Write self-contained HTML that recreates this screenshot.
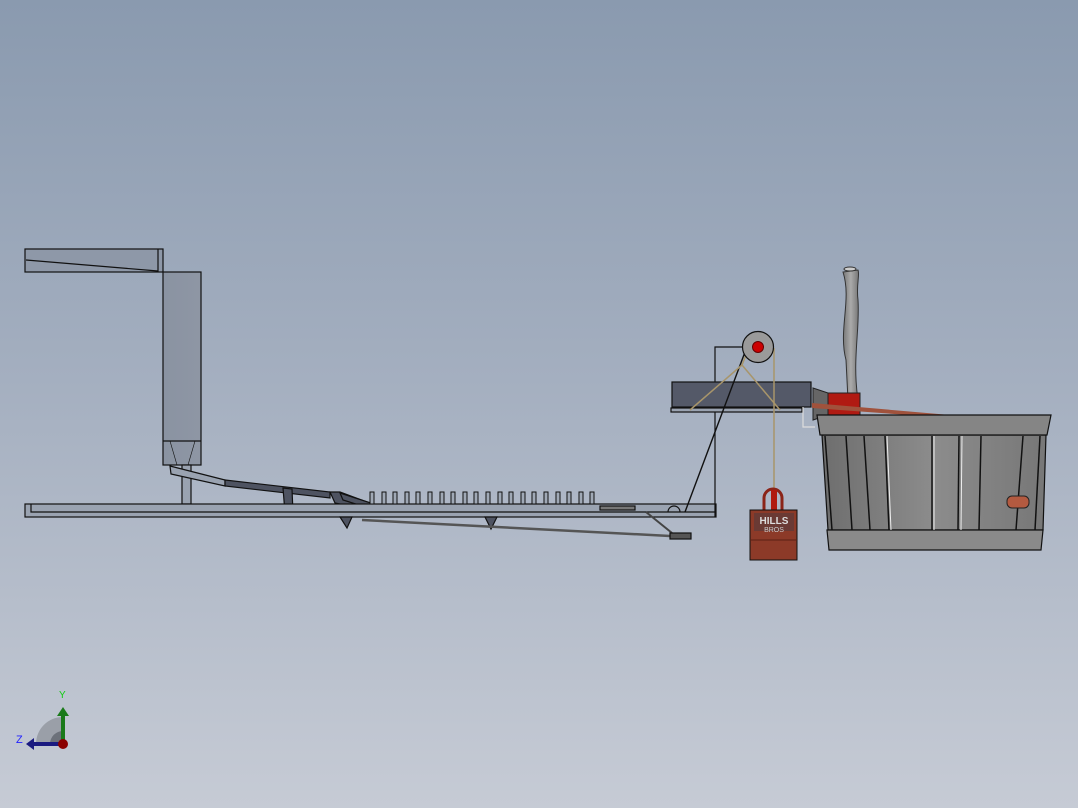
<!DOCTYPE html>
<html><head><meta charset="utf-8"><style>
html,body{margin:0;padding:0}
body{width:1078px;height:808px;overflow:hidden;background:linear-gradient(#8a9aaf 0%,#a3aebf 45%,#c6cbd5 100%);font-family:"Liberation Sans",sans-serif}
svg{position:absolute;left:0;top:0}
</style></head><body>
<svg width="1078" height="808" viewBox="0 0 1078 808">
<defs>
<linearGradient id="col" x1="0" x2="1"><stop offset="0" stop-color="#8a93a2"/><stop offset="1" stop-color="#8e96a4"/></linearGradient>
<linearGradient id="bk" x1="0" x2="1"><stop offset="0" stop-color="#6e6e6e"/><stop offset=".5" stop-color="#8c8c8c"/><stop offset="1" stop-color="#777"/></linearGradient>
<linearGradient id="ax" x1="0" x2="1"><stop offset="0" stop-color="#777"/><stop offset=".5" stop-color="#aaa"/><stop offset="1" stop-color="#777"/></linearGradient>
</defs>
<g stroke="#111" stroke-width="1.2">
<!-- top chute -->
<rect x="25" y="249" width="138" height="23" fill="#8e98a8"/>
<line x1="26" y1="260" x2="158" y2="271"/>
<line x1="158" y1="249" x2="158" y2="272"/>
<!-- column -->
<rect x="163" y="272" width="38" height="193" fill="url(#col)"/>
<line x1="163" y1="441" x2="201" y2="441"/>
<line x1="170" y1="441" x2="177" y2="465" stroke-width=".6"/>
<line x1="195" y1="441" x2="188" y2="465" stroke-width=".6"/>
<rect x="182" y="465" width="9" height="39" fill="#9aa3b1"/>
<!-- sloped chute -->
<polygon points="170,466 225,480 225,486 171,474" fill="#9aa3b1"/>
<polygon points="225,480 330,492 330,498 225,486" fill="#4e5361"/>
<polygon points="283,488 292,489 293,513 285,513" fill="#4e5361"/>
<polygon points="330,492 340,492 375,505 368,510 335,503" fill="#4e5361"/>
<polygon points="340,493 383,507 378,511 343,500" fill="#4e5361"/>
<!-- base rail -->
<rect x="25" y="504" width="691" height="13" fill="#9aa3b1"/>
<polyline points="31,504 31,512 716,512" fill="none"/>
<!-- feet -->
<path d="M340,517 L352,517 L347,528 Z" fill="#4e5361"/>
<path d="M485,517 L497,517 L491,529 Z" fill="#4e5361"/>
<!-- rod -->
<line x1="362" y1="520" x2="670" y2="536" stroke="#555" stroke-width="2.5"/>
<line x1="646" y1="512" x2="672" y2="533" stroke="#444" stroke-width="2"/>
<rect x="670" y="533" width="21" height="6" fill="#555"/>
<rect x="600" y="506" width="35" height="4" fill="#777"/>
<path d="M668,512 a6,6 0 0 1 12,0" fill="none"/>
</g>
<!-- pins -->
<g fill="#a0a9b6" stroke="#111" stroke-width="1">
<rect x="370" y="492" width="4" height="12"/><rect x="382" y="492" width="4" height="12"/><rect x="393" y="492" width="4" height="12"/><rect x="405" y="492" width="4" height="12"/><rect x="416" y="492" width="4" height="12"/><rect x="428" y="492" width="4" height="12"/><rect x="440" y="492" width="4" height="12"/><rect x="451" y="492" width="4" height="12"/><rect x="463" y="492" width="4" height="12"/><rect x="474" y="492" width="4" height="12"/><rect x="486" y="492" width="4" height="12"/><rect x="498" y="492" width="4" height="12"/><rect x="509" y="492" width="4" height="12"/><rect x="521" y="492" width="4" height="12"/><rect x="532" y="492" width="4" height="12"/><rect x="544" y="492" width="4" height="12"/><rect x="556" y="492" width="4" height="12"/><rect x="567" y="492" width="4" height="12"/><rect x="579" y="492" width="4" height="12"/><rect x="590" y="492" width="4" height="12"/>
</g>
<!-- pulley frame & platform -->
<g stroke="#111" stroke-width="1.2">
<polyline points="715,517 715,347 745,347" fill="none"/>
<rect x="672" y="382" width="139" height="25" fill="#545968"/>
<rect x="671" y="408" width="131" height="4" fill="#9aa3b1"/>
<polyline points="803,407 803,427 815,427" fill="none" stroke="#ddd"/>
<line x1="685" y1="512" x2="745" y2="352" stroke-width="1.4"/>
</g>
<g stroke="#a8956a" stroke-width="1.5" fill="none">
<line x1="742" y1="365" x2="690" y2="410"/>
<line x1="742" y1="365" x2="780" y2="410"/>
<line x1="774" y1="348" x2="774" y2="490"/>
<line x1="742" y1="365" x2="748" y2="350"/>
</g>
<circle cx="758" cy="347" r="15.5" fill="#9a9a9a" stroke="#111" stroke-width="1.2"/>
<circle cx="758" cy="347" r="5.5" fill="#c00" stroke="#600"/>
<!-- weight -->
<path d="M764,510 v-12 a9,9 0 0 1 18,0 v12" fill="none" stroke="#8b2418" stroke-width="3"/>
<rect x="771" y="490" width="6" height="20" fill="#b01a10"/>
<rect x="750" y="510" width="47" height="50" fill="#8c3a28" stroke="#111"/>
<line x1="750" y1="540" x2="797" y2="540" stroke="#5a2014"/>
<rect x="754" y="513" width="40" height="18" fill="#6a3a34"/>
<text x="774" y="524" font-size="10" fill="#ddd" text-anchor="middle" font-weight="bold">HILLS</text>
<text x="774" y="532" font-size="7" fill="#ccc" text-anchor="middle">BROS</text>
<!-- axe -->
<path d="M843,272 C852,300 838,330 846,360 L848,400 L858,400 C852,360 860,330 858,300 C856,285 860,275 858,270 Z" fill="url(#ax)" stroke="#333"/>
<ellipse cx="850" cy="269" rx="6" ry="2" fill="#ccc" stroke="#333"/>
<polygon points="813,388 828,393 828,415 813,420" fill="#666" stroke="#222"/>
<rect x="828" y="393" width="32" height="22" fill="#b01a12" stroke="#222"/>
<polygon points="812,403 950,415 950,418 812,408" fill="#a0523c"/>
<!-- basket -->
<g stroke="#111" stroke-width="1.2">
<polygon points="822,435 1046,435 1043,530 828,530" fill="url(#bk)"/>
<polygon points="817,415 1051,415 1047,435 820,435" fill="#858585"/>
<polygon points="827,530 1043,530 1041,550 829,550" fill="#8a8a8a"/>
</g>
<g stroke="#111" stroke-width="1.5">
<line x1="825" y1="436" x2="832" y2="530"/><line x1="846" y1="436" x2="852" y2="530"/><line x1="864" y1="436" x2="870" y2="530"/><line x1="885" y1="436" x2="889" y2="530"/><line x1="932" y1="436" x2="932" y2="530"/><line x1="959" y1="436" x2="958" y2="530"/><line x1="981" y1="436" x2="979" y2="530"/><line x1="1023" y1="436" x2="1016" y2="530"/><line x1="1040" y1="436" x2="1035" y2="530"/>
</g>
<g stroke="#eee" stroke-width="1"><line x1="887" y1="436" x2="891" y2="530"/><line x1="934" y1="436" x2="934" y2="530"/><line x1="962" y1="436" x2="961" y2="530"/></g>
<rect x="1007" y="496" width="22" height="12" rx="5" fill="#b35a40" stroke="#222"/>
<!-- triad -->
<path d="M36,744 A27,27 0 0 1 63,717 L63,744 Z" fill="#9a9fa8"/>
<path d="M50,744 A13,13 0 0 1 63,731 L63,744 Z" fill="#6c717a"/>
<rect x="61" y="714" width="4" height="30" fill="#1a7a1a"/>
<polygon points="57,716 63,707 69,716" fill="#1a7a1a"/>
<rect x="32" y="742" width="30" height="4" fill="#1a1a80"/>
<polygon points="34,738 26,744 34,750" fill="#1a1a80"/>
<circle cx="63" cy="744" r="5" fill="#8b0000"/>
<text x="59" y="698" font-size="10" fill="#1c1">Y</text>
<text x="16" y="743" font-size="11" fill="#22f">Z</text>
</svg>
</body></html>
